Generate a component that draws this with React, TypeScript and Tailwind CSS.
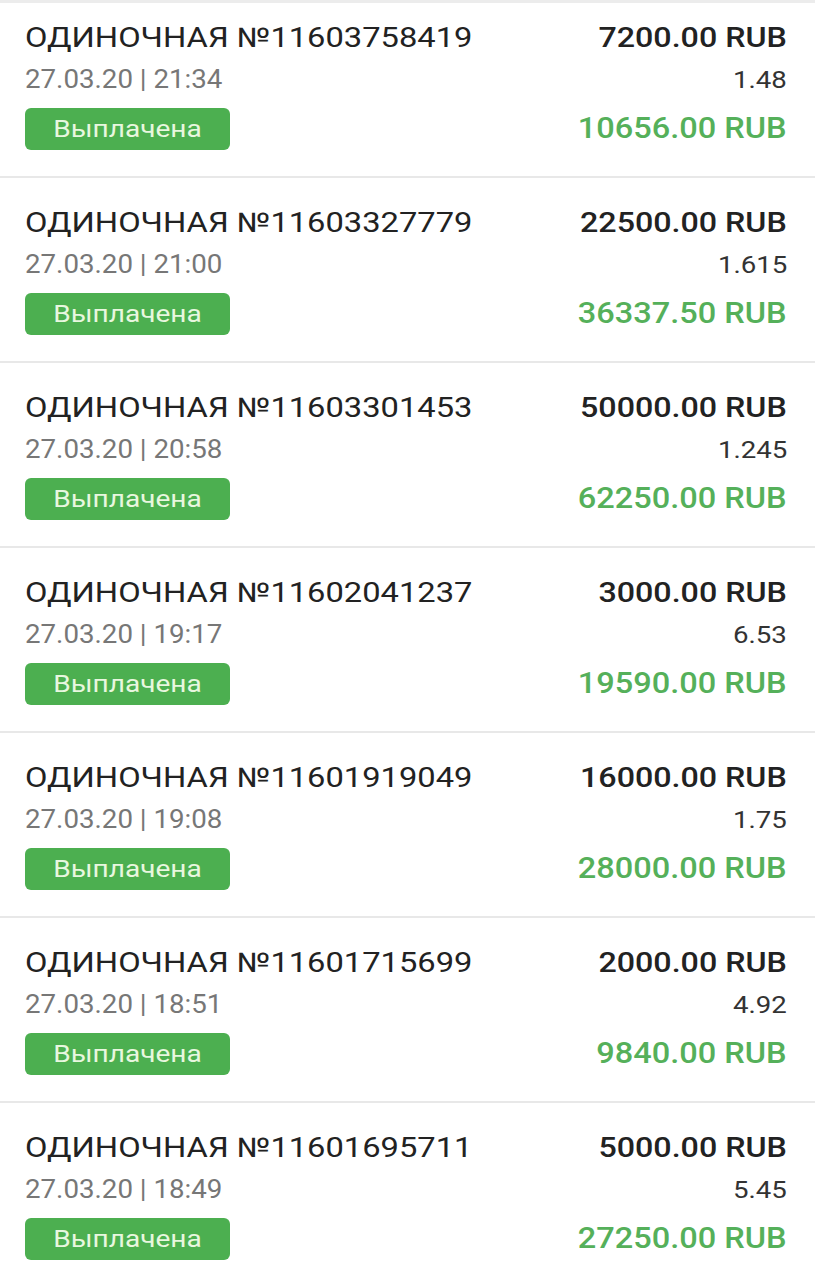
const bets = [
  { id: "11603758419", date: "27.03.20 | 21:34", stake: "7200.00 RUB", coef: "1.48", win: "10656.00 RUB" },
  { id: "11603327779", date: "27.03.20 | 21:00", stake: "22500.00 RUB", coef: "1.615", win: "36337.50 RUB" },
  { id: "11603301453", date: "27.03.20 | 20:58", stake: "50000.00 RUB", coef: "1.245", win: "62250.00 RUB" },
  { id: "11602041237", date: "27.03.20 | 19:17", stake: "3000.00 RUB", coef: "6.53", win: "19590.00 RUB" },
  { id: "11601919049", date: "27.03.20 | 19:08", stake: "16000.00 RUB", coef: "1.75", win: "28000.00 RUB" },
  { id: "11601715699", date: "27.03.20 | 18:51", stake: "2000.00 RUB", coef: "4.92", win: "9840.00 RUB" },
  { id: "11601695711", date: "27.03.20 | 18:49", stake: "5000.00 RUB", coef: "5.45", win: "27250.00 RUB" },
];

type Bet = (typeof bets)[number];

// the screenshot is a bit stretched sideways, so glyphs get a horizontal scale
function BetRow({ bet, first }: { bet: Bet; first: boolean }) {
  return (
    <div
      className={
        first
          ? "flex h-[173px] shrink-0 justify-between px-[25px] pt-[18px]"
          : "flex h-[185px] shrink-0 justify-between border-t-2 border-[#e8e8e8] px-[25px] pt-[28px]"
      }
    >
      <div className="flex flex-col items-start">
        <div className="origin-left scale-x-[1.21] whitespace-nowrap text-[27px] leading-[34px] text-[#222222]">
          ОДИНОЧНАЯ №{bet.id}
        </div>
        <div className="mt-[9px] origin-left scale-x-[1.065] whitespace-nowrap text-[26px] leading-[30px] text-[#777777]">
          {bet.date}
        </div>
        <div className="mt-[14px] flex h-[42px] w-[205px] items-center justify-center rounded-[6px] bg-[#4caf50]">
          <span className="inline-block scale-x-[1.17] text-[24px] text-[#e8f7df]">Выплачена</span>
        </div>
      </div>
      <div className="flex flex-col items-end pr-[3px]">
        <div className="origin-right scale-x-[1.15] whitespace-nowrap text-[28px] font-medium leading-[34px] text-[#222222]">
          {bet.stake}
        </div>
        <div className="mt-[10px] origin-right scale-x-[1.15] text-[24px] leading-[30px] text-[#333333]">{bet.coef}</div>
        <div className="mt-[15px] origin-right scale-x-[1.084] whitespace-nowrap text-[30px] font-medium leading-[36px] text-[#55b05a]">
          {bet.win}
        </div>
      </div>
    </div>
  );
}

export default function App() {
  return (
    <div className="flex h-[1280px] w-full flex-col overflow-hidden bg-white font-['Roboto',sans-serif]">
      <div className="h-[3px] shrink-0 bg-[#ececec]" />
      {bets.map((b, i) => (
        <BetRow key={b.id} bet={b} first={i === 0} />
      ))}
    </div>
  );
}
